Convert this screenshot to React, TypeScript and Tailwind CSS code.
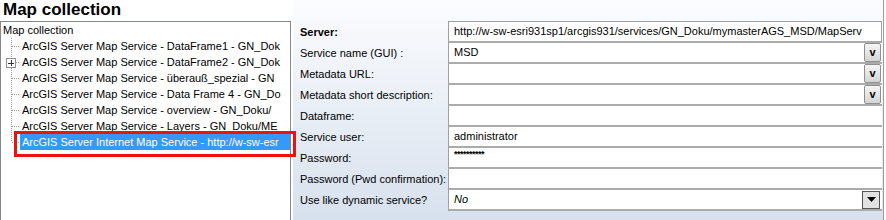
import React from "react";

const FONT = { fontFamily: '"Liberation Sans", Arial, sans-serif' };

const items = [
  "ArcGIS Server Map Service - DataFrame1 - GN_Dok",
  "ArcGIS Server Map Service - DataFrame2 - GN_Dok",
  "ArcGIS Server Map Service - überauß_spezial - GN",
  "ArcGIS Server Map Service - Data Frame 4 - GN_Do",
  "ArcGIS Server Map Service - overview - GN_Doku/",
  "ArcGIS Server Map Service - Layers - GN_Doku/ME",
  "ArcGIS Server Internet Map Service - http://w-sw-esr",
];

function Connector({ last, plus }: { last?: boolean; plus?: boolean }) {
  return (
    <svg width="19" height="16" className="shrink-0" shapeRendering="crispEdges">
      <line x1="10.5" y1="0" x2="10.5" y2={last ? 8 : 16} stroke="#a0a0a0" strokeDasharray="1 1" />
      <line x1="11" y1="8.5" x2="19" y2="8.5" stroke="#a0a0a0" strokeDasharray="1 1" />
      {plus && (
        <g>
          <rect x="5.5" y="4.5" width="9" height="9" fill="#fff" stroke="#8e8f8f" />
          <line x1="7" y1="9" x2="13" y2="9" stroke="#333" />
          <line x1="10" y1="6" x2="10" y2="12" stroke="#333" />
        </g>
      )}
    </svg>
  );
}

function VBtn() {
  return (
    <div className="w-[17px] h-[19px] shrink-0 my-[-1px] rounded-[2px] border border-[#8f8f8f] bg-gradient-to-b from-[#f6f6f6] to-[#d4d4d4] flex items-center justify-center text-[11px] font-bold leading-none text-black">
      v
    </div>
  );
}

function ArrowBtn() {
  return (
    <div className="w-[18px] h-[18px] shrink-0 border border-[#555] bg-[#e2e2e2] flex items-center justify-center">
      <svg width="9" height="5">
        <polygon points="0,0 9,0 4.5,5" fill="#000" />
      </svg>
    </div>
  );
}

type Row = { label: string; value?: string; bold?: boolean; kind?: "v" | "combo" | "pwd" };

const rows: Row[] = [
  { label: "Server:", value: "http://w-sw-esri931sp1/arcgis931/services/GN_Doku/mymasterAGS_MSD/MapServ", bold: true },
  { label: "Service name (GUI) :", value: "MSD", kind: "v" },
  { label: "Metadata URL:", kind: "v" },
  { label: "Metadata short description:", kind: "v" },
  { label: "Dataframe:" },
  { label: "Service user:", value: "administrator" },
  { label: "Password:", value: "**********", kind: "pwd" },
  { label: "Password (Pwd confirmation):" },
  { label: "Use like dynamic service?", value: "No", kind: "combo" },
];

export default function App() {
  return (
    <div className="w-[886px] h-[220px] bg-white flex overflow-hidden relative text-black" style={FONT}>
      {/* Left: title + tree */}
      <div className="w-[291px] shrink-0 flex flex-col">
        <div className="h-[21px] pl-[3px] text-[17px] font-bold leading-[20px] whitespace-nowrap">Map collection</div>
        <div className="flex-1 border-l border-t border-r border-[#828790] bg-white overflow-hidden text-[11px]">
          <div className="h-[16px] leading-[16px] pl-[2px] whitespace-nowrap">Map collection</div>
          {items.map((t, i) => {
            const sel = i === items.length - 1;
            return (
              <div key={i} className="h-[16px] flex items-center whitespace-nowrap">
                <Connector last={sel} plus={i === 1} />
                <span
                  className={
                    sel
                      ? "flex-1 px-[2px] h-[16px] leading-[16px] bg-[#3399ff] text-white"
                      : "px-[2px] h-[16px] leading-[16px]"
                  }
                >
                  {t}
                </span>
              </div>
            );
          })}
        </div>
      </div>

      {/* Right: property grid */}
      <div className="ml-[2px] w-[591px] shrink-0 border-r border-[#9c9c9c] bg-gradient-to-b from-[#fbfcfe] to-[#d7e1ed] pt-[21px] text-[11px]">
        {rows.map((r, i) => (
          <div key={i} className="flex">
            <div
              className={
                "w-[155px] shrink-0 pl-[7px] flex items-center whitespace-nowrap " +
                (i === 0 ? "h-[22px] pt-[1px] font-bold" : "h-[21px]")
              }
            >
              {r.label}
            </div>
            <div
              className={
                "w-[434px] shrink-0 bg-white border-l border-[#a0a0a0] border-b-2 border-b-[#ababab] flex items-center pl-[5px] whitespace-nowrap " +
                (i === 0 ? "h-[22px] border-t border-t-[#a0a0a0] border-r border-r-[#a0a0a0]" : "h-[21px]")
              }
            >
              <span
                className={
                  "flex-1 " +
                  (r.kind === "combo" ? "italic" : "") +
                  (r.kind === "pwd" ? " text-[9px] font-bold self-start leading-[10px] pt-[1px] tracking-[-0.5px]" : "")
                }
              >
                {r.value ?? ""}
              </span>
              {r.kind === "v" && (
                <div className="flex items-center pr-[1px]">
                  <VBtn />
                </div>
              )}
              {r.kind === "combo" && (
                <div className="flex items-center pr-[2px]">
                  <ArrowBtn />
                </div>
              )}
            </div>
          </div>
        ))}
      </div>

      {/* Red annotation around the selected tree node */}
      <div className="absolute left-[14px] top-[131px] w-[282px] h-[26px] border-[3px] border-[#ee1111] pointer-events-none" />
    </div>
  );
}
